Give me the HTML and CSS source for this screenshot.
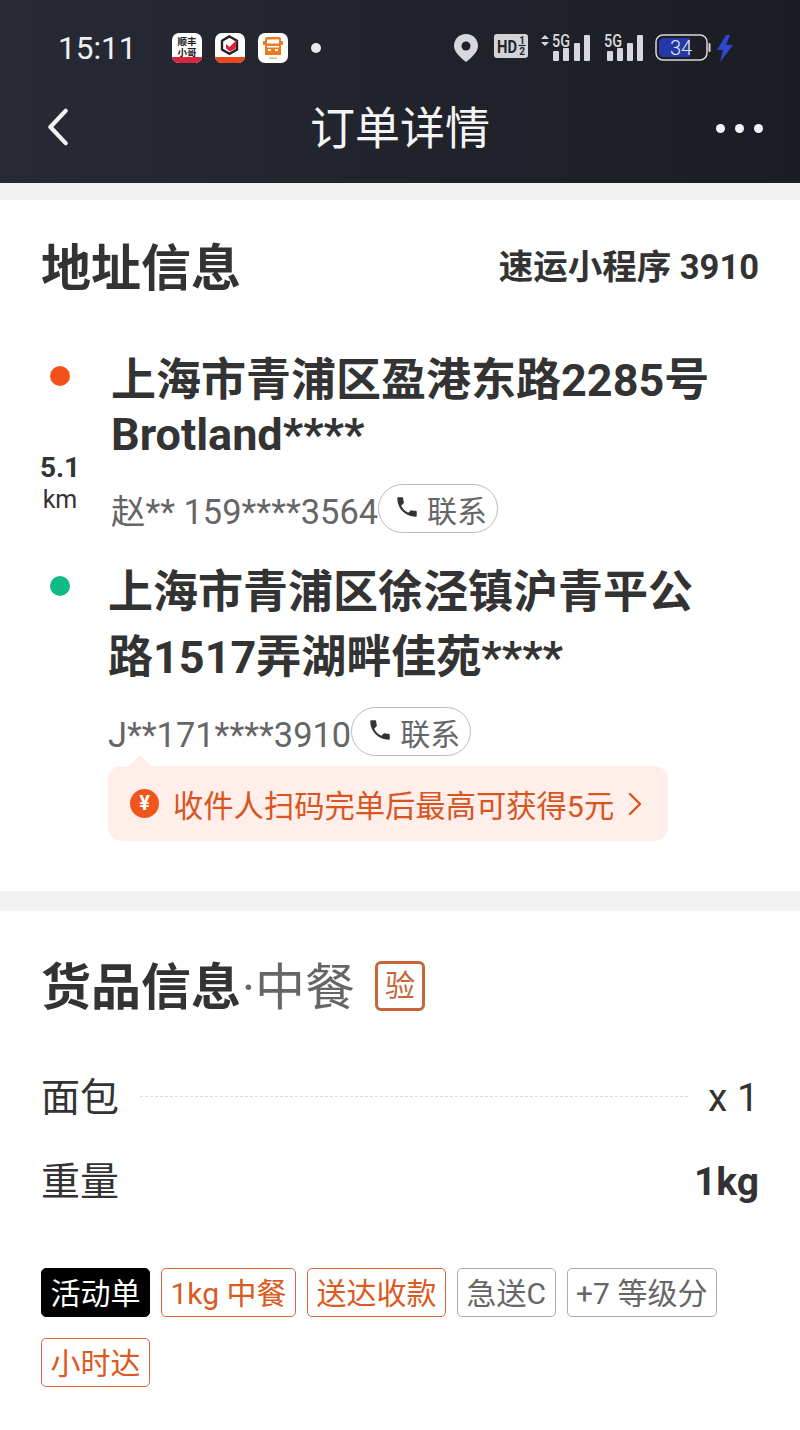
FILE: index.html
```html
<!DOCTYPE html>
<html lang="zh-CN">
  <head>
    <meta charset="UTF-8" />
    <meta name="viewport" content="width=device-width, initial-scale=1.0" />
    <title>订单详情</title>
    <link rel="stylesheet" href="styles.css">
  </head>
  <body>
    <header class="top-bar">
      <div class="status-bar">
        <span class="status-time">15:11</span>
        <div class="app-icons">
          <svg class="app-icon" viewBox="0 0 30 30">
            <rect width="30" height="30" rx="7" fill="#fff" />
            <path d="M0 24h30v-1c0 4-3 7-7 7H7c-4 0-7-3-7-7z" fill="#d8263c" />
            <text x="15" y="12" class="app-label">顺丰</text>
            <text x="15" y="23" class="app-label">小哥</text>
          </svg>
          <svg class="app-icon" viewBox="0 0 30 30">
            <rect width="30" height="30" rx="7" fill="#fff" />
            <path d="M0 24h30v-1c0 4-3 7-7 7H7c-4 0-7-3-7-7z" fill="#e8481c" />
            <path d="M14.500 3.500l7.500 4.300v8.700l-7.500 4.300-7.500-4.300V7.800z" fill="none" stroke="#222" stroke-width="2.400" />
            <path d="M11 11l3.500 3 7.500-7.500-1.500 9-5.500 3-4-3z" fill="#dc1f3c" />
          </svg>
          <svg class="app-icon" viewBox="0 0 30 30">
            <rect width="30" height="30" rx="7" fill="#fff" />
            <path d="M9 4h12c1 0 2 1 2 2v2h2v4h-2v10H7V12H5V8h2V6c0-1 1-2 2-2z" fill="#ee7a22" />
            <path d="M9 6.500h12v4H9zM9 13h12v1.500H9z" fill="#fff" />
            <path d="M10 16h3v2h-3zM17 16h3v2h-3z" fill="#fff" />
            <path d="M11 24.500h8v1.500h-8z" fill="#f3b27c" />
          </svg>
          <span class="status-dot"></span>
        </div>
        <div class="status-icons">
          <svg class="ic-pin" viewBox="0 0 24 28">
            <path d="M12 0C5 0 0 5 0 12c0 6 7 12 12 16 5-4 12-10 12-16C24 5 19 0 12 0z" fill="#d8d8dc" />
            <circle cx="12" cy="12" r="4.500" fill="#1f2129" />
          </svg>
          <svg class="ic-hd" viewBox="0 -2 34 28">
            <rect width="34" height="24" rx="3" fill="#d4d4d8" />
            <text x="3" y="19" class="hd-text" textLength="20" lengthAdjust="spacingAndGlyphs">HD</text>
            <text x="28" y="10" class="hd-small">1</text>
            <text x="28" y="21" class="hd-small">2</text>
            <path d="M24.500 11.500h7" stroke="#22242c" stroke-width="1.200" />
          </svg>
          <svg class="ic-signal" viewBox="0 -6 52 34">
            <path d="M1 5l4-4 4 4zM1 8l4 4 4-4z" fill="#d8d8dc" />
            <text x="12" y="13" class="net-text" textLength="18" lengthAdjust="spacingAndGlyphs">5G</text>
            <rect x="13" y="17" width="6" height="10" rx="1" fill="#d8d8dc" />
            <rect x="23" y="14" width="6" height="13" rx="1" fill="#d8d8dc" />
            <rect x="34" y="9" width="6" height="18" rx="1" fill="#d8d8dc" />
            <rect x="44" y="1" width="6" height="26" rx="1" fill="#d8d8dc" />
          </svg>
          <svg class="ic-signal-2" viewBox="0 -6 40 34">
            <text x="0" y="13" class="net-text" textLength="18" lengthAdjust="spacingAndGlyphs">5G</text>
            <rect x="3" y="17" width="6" height="10" rx="1" fill="#d8d8dc" />
            <rect x="13" y="14" width="6" height="13" rx="1" fill="#d8d8dc" />
            <rect x="23" y="9" width="6" height="18" rx="1" fill="#d8d8dc" />
            <rect x="33" y="1" width="6" height="26" rx="1" fill="#d8d8dc" />
          </svg>
          <svg class="ic-battery" viewBox="0 0 56 28">
            <rect x="1" y="1" width="51" height="25" rx="7" fill="none" stroke="#d8d8dc" stroke-width="1.500" />
            <path d="M9 4h26v19H9c-3 0-5-2-5-5V9c0-3 2-5 5-5z" fill="#2438a8" />
            <text x="26" y="20.500" class="batt-text">34</text>
            <rect x="53.500" y="9" width="2" height="9" rx="1" fill="#d8d8dc" />
          </svg>
          <svg class="ic-bolt" viewBox="0 0 17 27">
            <path d="M9 0L0 15h6l-3 12 13-17h-7l4-10z" fill="#2f47d0" />
          </svg>
        </div>
      </div>
      <nav class="nav-bar">
        <svg class="nav-back" viewBox="0 0 24 40">
          <path d="M20 3L4 20l16 17" fill="none" stroke="#f2f2f2" stroke-width="4.500" stroke-linecap="round" stroke-linejoin="round" />
        </svg>
        <h1 class="nav-title">订单详情</h1>
        <div class="nav-more"><span></span><span></span><span></span></div>
      </nav>
    </header>

    <section class="card address-card">
      <div class="card-head">
        <h2 class="card-title">地址信息</h2>
        <div class="order-source">速运小程序 3910</div>
      </div>

      <div class="route">
        <div class="route-side">
          <span class="route-dot pickup"></span>
          <div class="distance-num">5.1</div>
          <div class="distance-unit">km</div>
          <span class="route-dot dropoff"></span>
        </div>
        <div class="route-main">
          <div class="addr-text addr-first">上海市青浦区盈港东路2285号<br>Brotland****</div>
          <div class="contact-row">
            <span class="contact-text">赵** 159****3564</span>
            <span class="contact-btn">
              <svg class="phone-icon" viewBox="0 0 24 24"><path d="M6.620 10.790c1.440 2.830 3.760 5.140 6.590 6.590l2.200-2.200c.27-.27.67-.36 1.020-.24 1.120.37 2.330.57 3.570.57.55 0 1 .45 1 1V20c0 .55-.45 1-1 1-9.390 0-17-7.610-17-17 0-.55.45-1 1-1h3.500c.55 0 1 .45 1 1 0 1.250.2 2.450.57 3.570.11.35.03.74-.25 1.020l-2.200 2.200z" /></svg>
              联系
            </span>
          </div>
          <div class="second-stop">
            <div class="addr-text addr-second">上海市青浦区徐泾镇沪青平公<br>路1517弄湖畔佳苑****</div>
            <div class="contact-row contact-second">
              <span class="contact-text">J**171****3910</span>
              <span class="contact-btn">
                <svg class="phone-icon" viewBox="0 0 24 24"><path d="M6.620 10.790c1.440 2.830 3.760 5.140 6.590 6.590l2.200-2.200c.27-.27.67-.36 1.020-.24 1.120.37 2.330.57 3.570.57.55 0 1 .45 1 1V20c0 .55-.45 1-1 1-9.390 0-17-7.610-17-17 0-.55.45-1 1-1h3.500c.55 0 1 .45 1 1 0 1.250.2 2.450.57 3.570.11.35.03.74-.25 1.020l-2.200 2.200z" /></svg>
                联系
              </span>
            </div>
            <div class="reward-tip">
              <span class="reward-coin">¥</span>
              <span class="reward-text">收件人扫码完单后最高可获得5元</span>
              <svg class="reward-arrow" viewBox="0 0 14 24">
                <path d="M2 2l10 10L2 22" fill="none" stroke="#d9551f" stroke-width="2.400" stroke-linecap="round" stroke-linejoin="round" />
              </svg>
            </div>
          </div>
        </div>
      </div>
    </section>

    <section class="card goods-card">
      <div class="goods-head">
        <h2 class="card-title">货品信息</h2>
        <span class="goods-type">·中餐</span>
        <span class="verify-badge">验</span>
      </div>
      <div class="goods-row first">
        <span>面包</span>
        <span class="dotted-line"></span>
        <span class="goods-count">x 1</span>
      </div>
      <div class="goods-row second">
        <span>重量</span>
        <strong class="goods-weight">1kg</strong>
      </div>
      <div class="tag-list">
        <span class="tag black">活动单</span>
        <span class="tag orange">1kg 中餐</span>
        <span class="tag orange">送达收款</span>
        <span class="tag gray">急送C</span>
        <span class="tag gray">+7 等级分</span>
        <span class="tag orange">小时达</span>
      </div>
    </section>
  </body>
</html>
```

FILE: styles.css
```css
* {
  box-sizing: border-box;
}
html,
body {
  margin: 0;
  height: 1430px;
  overflow: hidden;
}
body {
  font-family: Roboto, "Noto Sans CJK SC", sans-serif;
  background-color: #f2f2f2;
  color: #333;
}
h1,
h2 {
  margin: 0;
}

/* top bar */
.top-bar {
  height: 183px;
  padding-top: 24px;
  background: linear-gradient(90deg, #272a35 0%, #1b1d24 100%);
}
.status-bar {
  display: flex;
  align-items: center;
  height: 50px;
  padding-left: 58px;
}
.status-time {
  width: 114px;
  font-size: 31.500px;
  font-weight: 400;
  color: #f0f0f0;
  line-height: 50px;
}
.app-icons {
  display: flex;
  align-items: center;
  gap: 13px;
  width: 282px;
  margin-top: -2px;
}
.app-icon {
  width: 30px;
  height: 30px;
}
.app-label {
  font-size: 9.500px;
  font-weight: 700;
  text-anchor: middle;
  fill: #222;
}
.status-dot {
  width: 10px;
  height: 10px;
  margin-left: 10px;
  border-radius: 50%;
  background-color: #e8eaf0;
}
.status-icons {
  display: flex;
  align-items: center;
  margin-top: -2px;
}
.ic-pin {
  width: 24px;
  height: 28px;
  margin-right: 16px;
}
.ic-hd {
  width: 34px;
  height: 28px;
  margin-top: -4px;
  margin-right: 12px;
}
.hd-text {
  font-size: 18px;
  font-weight: 700;
  fill: #22242c;
}
.hd-small {
  font-size: 10px;
  font-weight: 700;
  fill: #22242c;
  text-anchor: middle;
}
.ic-signal {
  width: 52px;
  height: 34px;
  margin-top: -6px;
  margin-right: 12px;
}
.ic-signal-2 {
  width: 40px;
  height: 34px;
  margin-top: -6px;
  margin-right: 11px;
}
.net-text {
  font-size: 18px;
  font-weight: 500;
  fill: #d8d8dc;
}
.ic-battery {
  width: 56px;
  height: 28px;
  margin-right: 6px;
}
.batt-text {
  font-size: 20px;
  font-weight: 300;
  text-anchor: middle;
  fill: #e4e6ee;
}
.ic-bolt {
  width: 17px;
  height: 27px;
}
.nav-bar {
  display: grid;
  grid-template-columns: 1fr auto 1fr;
  align-items: center;
  height: 108px;
  padding: 0 41px;
}
.nav-back {
  width: 24px;
  height: 38px;
  margin-left: 5px;
  margin-top: -2px;
}
.nav-title {
  margin-top: 4px;
  font-size: 45px;
  font-weight: 400;
  color: #f4f4f4;
  line-height: 60px;
}
.nav-more {
  display: flex;
  justify-content: flex-end;
  gap: 10px;
  margin-right: -4px;
}
.nav-more span {
  width: 9px;
  height: 9px;
  border-radius: 50%;
  background-color: #f4f4f4;
}

/* cards */
.card {
  background-color: #fff;
}
.address-card {
  height: 691px;
  margin-top: 17px;
  padding: 42px 41px 0;
}
.goods-card {
  height: 519px;
  margin-top: 20px;
  padding: 50px 41px 0;
}
.card-head {
  display: flex;
  justify-content: space-between;
  align-items: center;
}
.card-title {
  font-size: 50px;
  font-weight: 700;
  line-height: 54px;
  margin-bottom: -4px;
  color: #333;
}
.order-source {
  font-size: 34.500px;
  font-weight: 700;
  line-height: 50px;
}

/* route */
.route {
  display: flex;
  margin-top: 62px;
}
.route-side {
  display: flex;
  flex-direction: column;
  align-items: center;
  width: 38px;
  margin-right: 32px;
}
.route-dot {
  width: 20px;
  height: 20px;
  border-radius: 50%;
}
.route-dot.pickup {
  margin-top: 12px;
  background-color: #f4511a;
}
.route-dot.dropoff {
  margin-top: 59px;
  background-color: #10bb85;
}
.distance-num {
  margin-top: 67px;
  font-size: 28px;
  font-weight: 700;
  line-height: 30px;
}
.distance-unit {
  font-size: 25px;
  line-height: 34px;
}
.addr-text {
  font-size: 45px;
  font-weight: 700;
  color: #333;
  white-space: nowrap;
}
.addr-first {
  line-height: 54px;
}
.addr-second {
  line-height: 65px;
}
.contact-row {
  display: flex;
  align-items: flex-start;
  margin-top: 22px;
}
.contact-second {
  margin-top: 17px;
}
.contact-text {
  font-size: 34.400px;
  color: #666;
  line-height: 56px;
  margin-bottom: -7px;
  white-space: nowrap;
}
.contact-btn {
  display: flex;
  align-items: center;
  justify-content: flex-start;
  gap: 7px;
  width: 120px;
  height: 49px;
  padding-left: 15px;
  border: 1px solid #bbb;
  border-radius: 25px;
  font-size: 30px;
  color: #666;
}
.phone-icon {
  width: 26px;
  height: 26px;
  margin-top: -3px;
  fill: #333;
}
.second-stop {
  margin-top: 27px;
  margin-left: -3px;
}
.reward-tip {
  position: relative;
  display: flex;
  align-items: center;
  width: 560px;
  height: 75px;
  margin-top: 10px;
  padding-left: 22px;
  border-radius: 14px;
  background-color: #ffeee9;
}
.reward-tip::before {
  content: "";
  position: absolute;
  top: -7px;
  left: 22px;
  width: 20px;
  height: 20px;
  background-color: #ffeee9;
  transform: rotate(45deg);
  border-radius: 3px;
}
.reward-coin {
  position: relative;
  width: 29px;
  height: 29px;
  margin-right: 14px;
  border-radius: 50%;
  background-color: #f0561c;
  color: #fff;
  font-size: 20px;
  font-weight: 700;
  line-height: 29px;
  text-align: center;
}
.reward-text {
  position: relative;
  font-size: 30.300px;
  color: #d9551f;
  white-space: nowrap;
}
.reward-arrow {
  width: 14px;
  height: 24px;
  margin-left: 14px;
}

/* goods */
.goods-head {
  display: flex;
  align-items: center;
}
.goods-type {
  margin-left: 1px;
  font-size: 50px;
  line-height: 54px;
  margin-bottom: -4px;
  color: #666;
}
.verify-badge {
  width: 50px;
  height: 50px;
  margin-left: 20px;
  border: 3px solid #c8643a;
  border-radius: 6px;
  font-size: 30px;
  line-height: 44px;
  text-align: center;
  color: #c8643a;
}
.goods-row {
  display: flex;
  align-items: center;
  justify-content: space-between;
  font-size: 39px;
  line-height: 44px;
  color: #333;
}
.goods-row.first {
  margin-top: 65px;
}
.goods-row.second {
  margin-top: 40px;
}
.dotted-line {
  flex: 1;
  height: 0;
  margin: -4px 20px 0 21px;
  border-top: 1px dashed #ddd;
}
.goods-weight {
  font-weight: 700;
}
.tag-list {
  display: flex;
  flex-wrap: wrap;
  gap: 21px 11px;
  margin-top: 64px;
}
.tag {
  height: 49px;
  padding: 0 8.500px;
  border: 1.500px solid;
  border-radius: 5px;
  font-size: 30px;
  line-height: 49px;
  white-space: nowrap;
}
.tag.black {
  background-color: #000;
  border-color: #000;
  color: #fff;
}
.tag.orange {
  border-color: #d9673a;
  color: #dc5a22;
}
.tag.gray {
  border-color: #aaa;
  color: #666;
}
```
